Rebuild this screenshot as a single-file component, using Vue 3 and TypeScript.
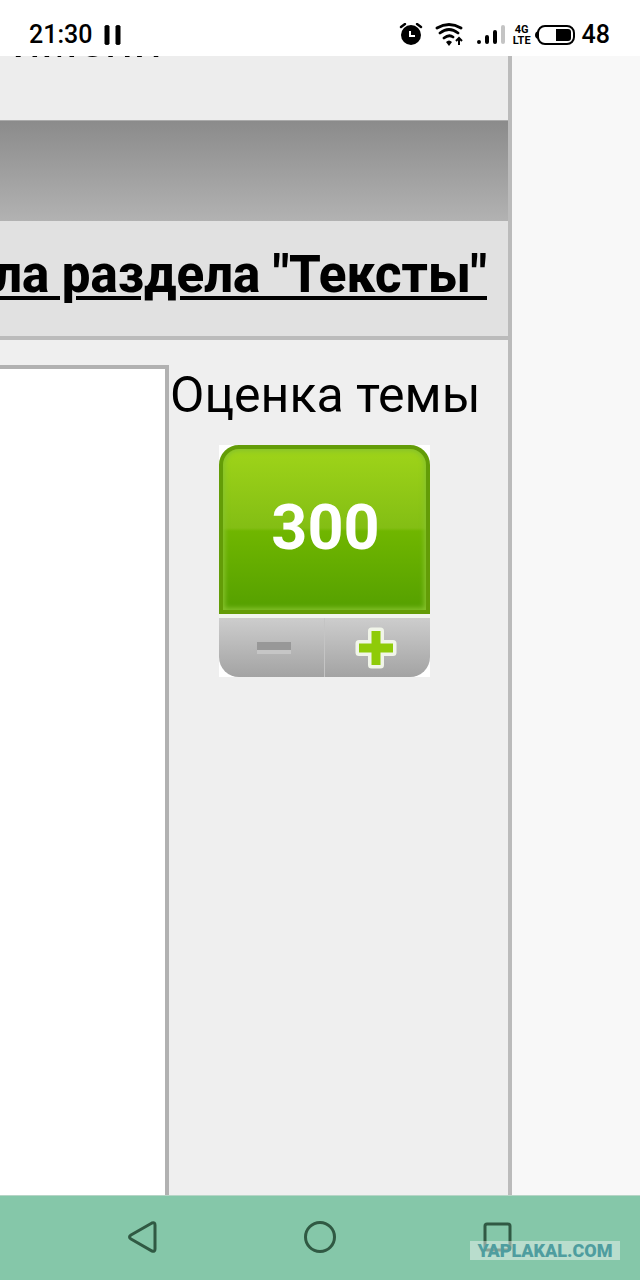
<script setup lang="ts">
import { ref } from 'vue'

const score = ref(300)
const heading = 'Правила раздела "Тексты"'
</script>

<template>
  <div class="screen">
    <header class="status">
      <div class="clock">
        <span>21:30</span>
        <svg width="18" height="20" viewBox="0 0 18 20"><path d="M1 1q2-1 4 0v18q-2 1-4 0zM12 1q2-1 4 0v18q-2 1-4 0z" stroke="#000" /></svg>
      </div>
      <div class="indicators">
        <svg width="24" height="24" viewBox="0 0 24 24">
          <circle cx="12" cy="12" r="10" />
          <path d="M2 4l4-3M22 4l-4-3" stroke="#000" stroke-width="2.4" stroke-linecap="round" />
          <path d="M11 8v5h5" fill="none" stroke="#fff" stroke-width="2" />
        </svg>
        <svg class="wifi" width="28" height="24" viewBox="0 0 28 24">
          <g fill="none" stroke="#000" stroke-width="2.8" stroke-linecap="round">
            <path d="M2 5Q14-2 26 5M5 10Q14 3 23 10M9 15Q14 11 18 14" />
          </g>
          <path d="M11 19q3-3 6 0l-3 4z" />
          <path d="M24 22v-6M21 18l3-3 3 3" fill="none" stroke="#000" stroke-width="2" />
        </svg>
        <svg class="signal" width="28" height="22" viewBox="0 0 28 22">
          <g stroke-width="4" stroke-linecap="round" stroke="#000">
            <path d="M2 18v.1M10 13v5M18 8v10" />
            <path d="M26 3v15" stroke="#c4c4c4" />
          </g>
        </svg>
        <span class="network"><span>4G</span><span>LTE</span></span>
        <svg class="battery" width="40" height="20" viewBox="0 0 40 20">
          <rect x="3" y="1" width="36" height="18" rx="7" fill="none" stroke="#000" stroke-width="2" />
          <path d="M3 6Q0 7 0 10t3 4zM21 4h12q3 0 3 3v6q0 3-3 3H21z" />
        </svg>
        <span>48</span>
      </div>
    </header>

    <main class="viewport">
      <div class="page">
        <div class="intro"><span>имени</span></div>
        <div class="band"></div>
        <h1 class="heading"><a href="#rules">{{ heading }}</a></h1>
        <div class="topic">
          <div class="post"></div>
          <aside class="rating">
            <p>Оценка темы</p>
            <div class="widget">
              <div class="face"><output class="score">{{ score }}</output></div>
              <div class="votes">
                <button type="button" aria-label="Минус" @click="score--">
                  <svg width="36" height="44" viewBox="0 0 36 44">
                    <path d="M1 16h34v12H1z" fill="#c6c6c6" /><path d="M1 16h34v8H1z" fill="#989898" />
                  </svg>
                </button>
                <button type="button" aria-label="Плюс" @click="score++">
                  <svg width="44" height="44" viewBox="0 0 44 44">
                    <path d="M17.500 5h9v12.500h12.500v9H26.500v12.500h-9V26.500H5v-9h12.500z" fill="#8fcb08" stroke="#f1f5e9" stroke-width="7" stroke-linejoin="round" paint-order="stroke" />
                  </svg>
                </button>
              </div>
            </div>
          </aside>
        </div>
      </div>
    </main>

    <nav class="navigation">
      <button type="button" aria-label="Назад">
        <svg width="34" height="36" viewBox="0 0 34 36"><path d="M26 4L5 16q-3 2 0 4l21 12q3 1 3-2V6q0-3-3-2z" /></svg>
      </button>
      <button type="button" aria-label="Домой">
        <svg width="34" height="36" viewBox="0 0 34 36"><circle cx="17" cy="18" r="14.5" /></svg>
      </button>
      <button type="button" aria-label="Недавние">
        <svg width="34" height="36" viewBox="0 0 34 36"><rect x="5" y="5" width="25" height="26" rx="2" /></svg>
      </button>
      <span class="watermark">YAPLAKAL.COM</span>
    </nav>
  </div>
</template>

<style>
body { margin: 0; }
</style>

<style scoped>
.screen {
  display: flex;
  flex-direction: column;
  height: 100vh;
  overflow: hidden;
  background: #f8f8f8;
  color: #000;
  font-family: Roboto, "Noto Sans", sans-serif;
}
.status {
  display: flex;
  justify-content: space-between;
  align-items: center;
  flex: 0 0 56px;
  box-sizing: border-box;
  padding: 13px 30px 0 29px;
  background: #fff;
  font-size: 25px;
  line-height: 32px;
  font-weight: 500;
}
.clock, .indicators { display: flex; align-items: center; }
.clock { gap: 12px; }
.wifi { margin-left: 12px; }
.signal { margin-left: 14px; }
.network {
  display: flex;
  flex-direction: column;
  align-items: center;
  margin: 0 4px 0 8px;
  font-size: 11px;
  line-height: 11px;
  font-weight: 700;
}
.battery { margin-right: 7px; }
.viewport { display: flex; flex: 1; min-height: 0; overflow: hidden; }
.page {
  display: flex;
  flex-direction: column;
  width: 80%;
  box-sizing: border-box;
  overflow: hidden;
  border-right: 4px solid #bbb;
  background: #efefef;
}
.intro {
  display: flex;
  align-items: flex-end;
  flex: 0 0 64px;
  box-sizing: border-box;
  padding: 0 0 50px 12px;
  overflow: hidden;
  background: #ededed;
  font-size: 50px;
  line-height: 60px;
}
.band {
  flex: 0 0 101px;
  box-sizing: border-box;
  border-top: 1px solid #aaa;
  background: linear-gradient(#8b8b8b, #b2b2b2);
}
.heading {
  display: flex;
  justify-content: flex-end;
  flex: none;
  margin: 0;
  padding: 24px 21px 31px 0;
  border-bottom: 4px solid #bbb;
  background: #e1e1e1;
  font-size: 51px;
  line-height: 60px;
  font-weight: 800;
  white-space: nowrap;
}
.heading a {
  color: #000;
  text-decoration: underline;
  text-decoration-thickness: 4px;
  text-underline-offset: 4px;
}
.topic { display: flex; flex: 1; padding-top: 25px; }
.post {
  flex: 1;
  border: solid #b1b1b1;
  border-width: 4px 4px 0 0;
  background: #fff;
}
.rating { flex: none; width: 339px; }
.rating p { margin: 0; padding-left: 1px; font-size: 50px; line-height: 60px; white-space: nowrap; }
.widget {
  width: 211px;
  margin: 20px 0 0 50px;
  background: #fff;
}
.face {
  display: flex;
  justify-content: center;
  align-items: center;
  height: 169px;
  box-sizing: border-box;
  border: 4px solid #639c07;
  border-radius: 20px 20px 0 0;
  background: linear-gradient(#9fd419, #83be14 49%, #70b600 51%, #55a000);
  box-shadow: inset 0 0 5px 2px #86c22c;
}
.score { padding: 0 0 4px 2px; color: #fff; font-size: 63px; line-height: 72px; font-weight: 700; }
.votes {
  display: flex;
  height: 59px;
  border-top: 4px solid #f1f5ee;
  border-radius: 0 0 20px 20px;
  background: linear-gradient(#cdcdcd, #a3a3a3);
}
.votes button {
  display: flex;
  flex: 1;
  justify-content: center;
  align-items: center;
  padding: 0 0 0 4px;
  border: 0;
  background: none;
}
.votes button + button { padding: 0 4px 0 0; border-left: 1px solid #c4c4c4; }
.navigation {
  position: relative;
  display: flex;
  justify-content: space-around;
  align-items: center;
  flex: 0 0 85px;
  box-sizing: border-box;
  padding: 0 54px 2px;
  border-top: 1px solid #b6d5c6;
  background: #85c7a9;
}
.navigation button { display: flex; padding: 0; border: 0; background: none; }
.navigation svg { fill: none; stroke: #305943; stroke-width: 3; }
.watermark {
  position: absolute;
  right: 20px;
  bottom: 20px;
  width: 150px;
  background: rgb(248 248 248 / 45%);
  color: #4f9d9f;
  font-size: 18px;
  line-height: 19px;
  font-weight: 900;
  text-align: center;
}
</style>
